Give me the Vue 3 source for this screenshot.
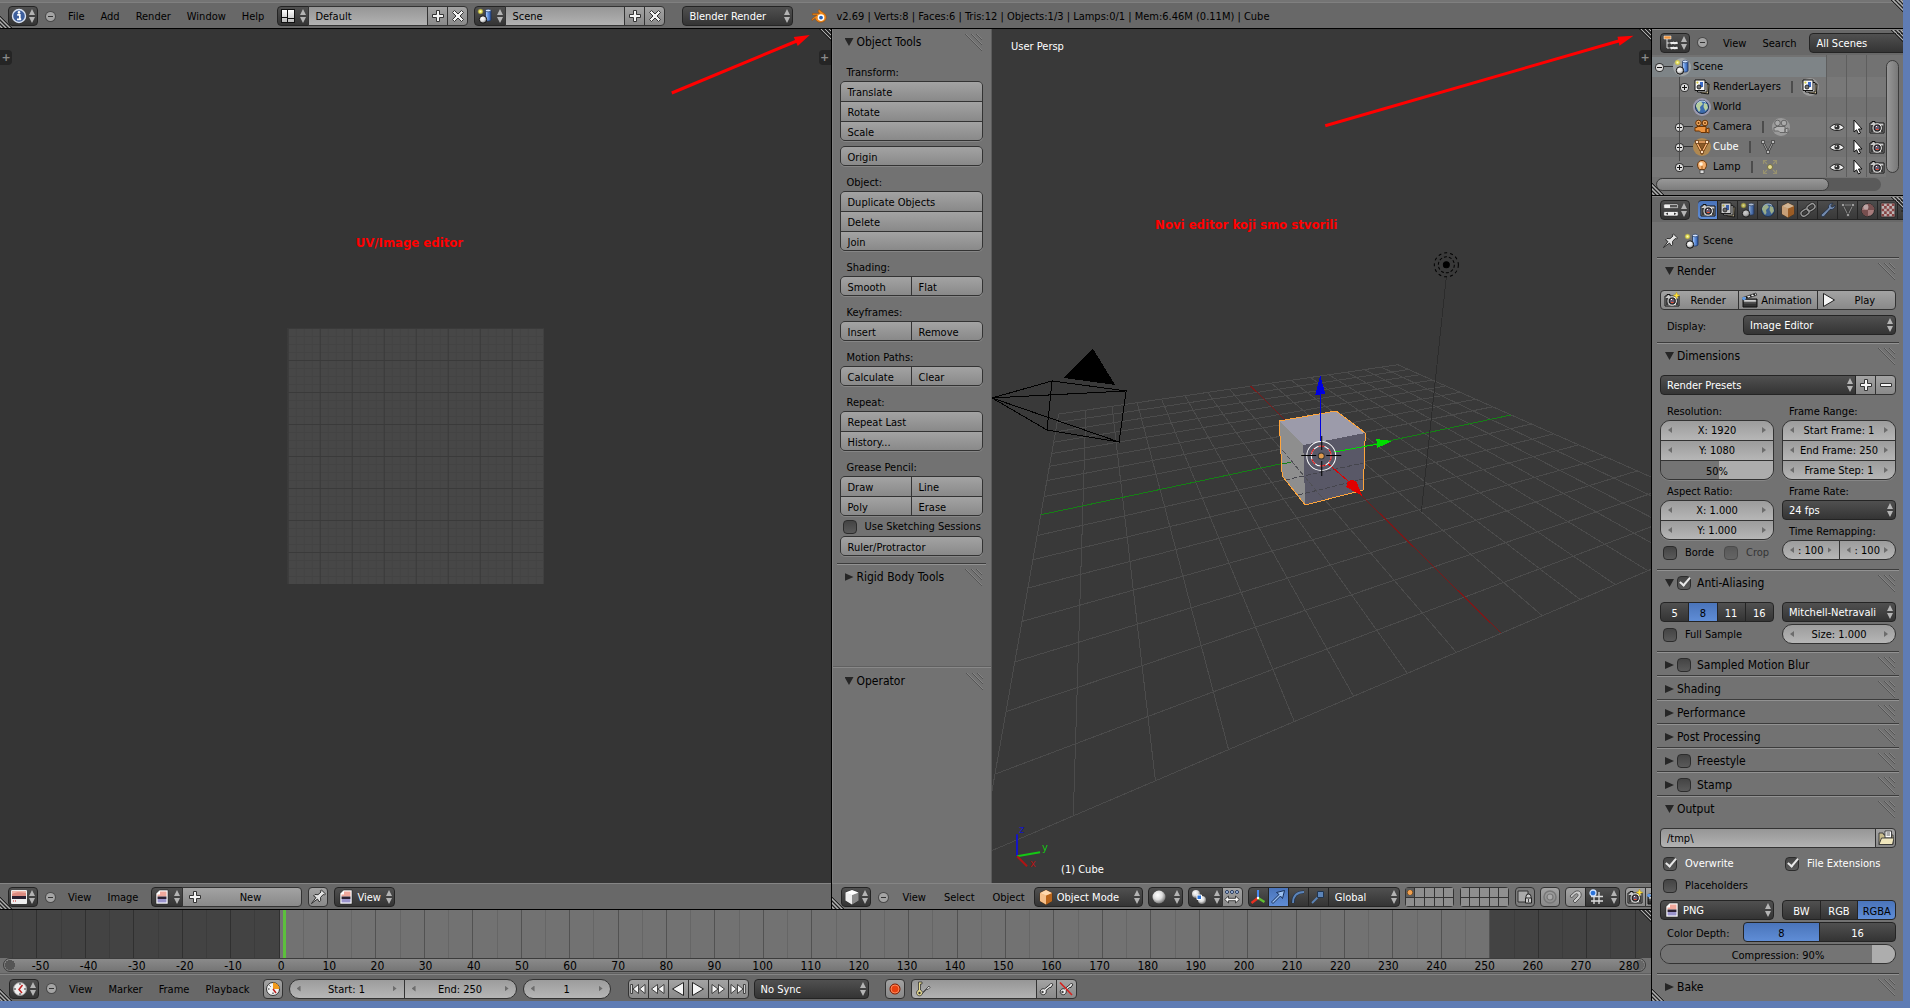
<script setup>
import { h, ref } from 'vue'

const Ic = (p) => h('svg', { class: 'ic', viewBox: '0 0 16 16', 'aria-hidden': 'true' }, [h('use', { href: '#' + p.n })])
Ic.props = ['n']

const Arrows = () => h('svg', { class: 'ud', viewBox: '0 0 6 14', 'aria-hidden': 'true' }, [h('path', { d: 'M3 0L6 6H0zM3 14L6 8H0z', fill: '#b4b4b4' })])
const Hatch = () => h('svg', { class: 'hatch', viewBox: '0 0 17 17', 'aria-hidden': 'true' }, [
  h('path', { d: 'M0 0L17 17M6 0L17 11M11 0L17 6', stroke: '#555' }),
  h('path', { d: 'M1 0L17 16M7 0L17 10M12 0L17 5', stroke: '#999', 'stroke-width': '0.5' })
])
const Corner = (p) => h('svg', { class: ['corner', p.at], viewBox: '0 0 12 12', 'aria-hidden': 'true' }, [
  h('path', { d: 'M0 0L12 12M4 0L12 8M8 0L12 4', stroke: '#222' }),
  h('path', { d: 'M2 0L12 10M6 0L12 6M10 0L12 2', stroke: '#b0b0b0' })
])
Corner.props = ['at']

/* ground-plane perspective: u along X, v along Y, each from -8 to 8 */
const project = (u, v) => {
  const w = 1 - 0.055 * u + 0.02385 * v
  const x = (785.5 - 14.125 * u + 84 * v) / w
  const y = (364 + 16.125 * u - 8.75 * v) / w
  return [980 + x / 2.306, 330 + y / 2.904]
}
const seg = (a, b) => {
  const p = project(...a)
  const q = project(...b)
  return `M${p[0].toFixed(1)} ${p[1].toFixed(1)}L${q[0].toFixed(1)} ${q[1].toFixed(1)}`
}
const steps = Array.from({ length: 17 }, (_, i) => i - 8).filter((i) => i !== 0)
const gridPath = steps.map((i) => seg([i, -8], [i, 8]) + seg([-8, i], [8, i])).join('')
const xAxis = seg([-8, 0], [8, 0])
const yAxis = seg([0, -8], [0, 8])

const framePos = (f) => ((279.6 + 4.843 * f) / 1651) * 100 + '%'
const labelPos = (f) => ((281.2 + 4.814 * f) / 1651) * 100 + '%'
const marks = Array.from({ length: 34 }, (_, i) => i * 10 - 50)
const halfMarks = marks.map((m) => m - 5)

const toolGroups = [
  { label: 'Transform:', rows: [['Translate'], ['Rotate'], ['Scale']] },
  { rows: [['Origin']] },
  { label: 'Object:', rows: [['Duplicate Objects'], ['Delete'], ['Join']] },
  { label: 'Shading:', rows: [['Smooth', 'Flat']] },
  { label: 'Keyframes:', rows: [['Insert', 'Remove']] },
  { label: 'Motion Paths:', rows: [['Calculate', 'Clear']] },
  { label: 'Repeat:', rows: [['Repeat Last'], ['History...']] },
  { label: 'Grease Pencil:', rows: [['Draw', 'Line'], ['Poly', 'Erase']] }
]
const sketching = ref(false)
const tabs = ['camera', 'layers', 'scene', 'world', 'cubeo', 'link', 'wrench', 'mesh', 'material', 'texture', 'particles']
const objects = [
  { name: 'Camera', icon: 'movie', data: 'moviegrey', active: false },
  { name: 'Cube', icon: 'mesho', data: 'mesh', active: true },
  { name: 'Lamp', icon: 'lamp', data: 'lampdata', active: false }
]
const closedPanels = [
  { name: 'Sampled Motion Blur', check: true },
  { name: 'Shading' },
  { name: 'Performance' },
  { name: 'Post Processing' },
  { name: 'Freestyle', check: true },
  { name: 'Stamp', check: true }
]
const transport = [
  ['Jump to start', 'first'], ['Previous keyframe', 'prev'], ['Play reverse', 'playrev'],
  ['Play', 'play'], ['Next keyframe', 'next'], ['Jump to end', 'last']
]
</script>

<template>
  <svg class="defs" aria-hidden="true">
    <defs>
      <radialGradient id="gBall" cx=".4" cy=".35" r=".7"><stop offset="0" stop-color="#fff" /><stop offset=".5" stop-color="#ddd" /><stop offset="1" stop-color="#666" /></radialGradient>
      <linearGradient id="gCyl"><stop offset="0" stop-color="#bcd8ff" /><stop offset=".5" stop-color="#5c8ddb" /><stop offset="1" stop-color="#2c549e" /></linearGradient>
      <radialGradient id="gLamp"><stop offset="0" stop-color="#ffffc0" /><stop offset=".5" stop-color="#e0d84a" /><stop offset="1" stop-color="#b0a83a" stop-opacity="0" /></radialGradient>
      <linearGradient id="gWhite" x2="0" y2="1"><stop offset="0" stop-color="#fff" /><stop offset="1" stop-color="#bbb" /></linearGradient>
    </defs>
    <symbol id="info" viewBox="0 0 16 16"><circle cx="8" cy="8" r="6.5" fill="#3c5e9c" stroke="#d8e2f2" stroke-width="1.4" /><path d="M6.2 6.8h2.6v4.4h1.2M6 11.3h4.2" stroke="#fff" stroke-width="1.7" fill="none" /><circle cx="8" cy="4.4" r="1.3" fill="#fff" /></symbol>
    <symbol id="split" viewBox="0 0 16 16"><path d="M1 1h14v14H1z" fill="#111" /><path d="M2 2h5v7H2zM2 10h5v4H2zM8 2h6v8H8zM8 11h6v3H8z" fill="url(#gWhite)" /></symbol>
    <symbol id="scene" viewBox="0 0 16 16"><path d="M8.5 2.5v9c0 2 5.5 2 5.5 0v-9" fill="url(#gCyl)" stroke="#1c3058" stroke-width=".8" /><ellipse cx="11.2" cy="2.5" rx="2.7" ry="1.3" fill="#d6e6ff" stroke="#1c3058" stroke-width=".6" /><circle cx="6" cy="11.5" r="3.7" fill="url(#gBall)" stroke="#111" /><circle cx="3.5" cy="3.5" r="3.3" fill="url(#gLamp)" /></symbol>
    <symbol id="plus" viewBox="0 0 16 16"><path d="M6.5 2.5h3v4h4v3h-4v4h-3v-4h-4v-3h4z" fill="#f4f4f4" stroke="#333" /></symbol>
    <symbol id="minus" viewBox="0 0 16 16"><path d="M2.5 6.5h11v3h-11z" fill="#f4f4f4" stroke="#333" /></symbol>
    <symbol id="cross" viewBox="0 0 16 16"><path d="M4.5 2.5L8 6l3.5-3.5 2 2L10 8l3.5 3.5-2 2L8 10l-3.5 3.5-2-2L6 8 2.5 4.5z" fill="#f4f4f4" stroke="#333" /></symbol>
    <symbol id="blender" viewBox="0 0 16 16"><path d="M8 1.500l6 4.600c2.600 3 1 8.200-4.400 8.200-3 0-5-1.800-5.400-4L1 12.500 0.800 11 6 7H1.500V5.400h7L6.900 3z" fill="#f08a1c" stroke="#9c4e08" stroke-width=".6" /><circle cx="10" cy="9.6" r="3.3" fill="#fff" /><circle cx="10" cy="9.6" r="1.9" fill="#2862b4" /></symbol>
    <symbol id="outliner" viewBox="0 0 16 16"><path d="M4 4v9h3M4 8h3" fill="none" stroke="#ddd" /><path d="M1 1h7v3H1z" fill="#f0943c" stroke="#fff" stroke-width=".5" /><path d="M7 6.500h8v3H7zM7 11.500h8v3H7z" fill="#eee" stroke="#222" stroke-dasharray="3 .6" stroke-width=".7" /></symbol>
    <symbol id="cubeg" viewBox="0 0 16 16"><path d="M1.500 3.500L8 1l6.500 2.500v8L8 15.500l-6.500-4z" fill="#ccc" stroke="#222" stroke-width=".7" /><path d="M1.500 3.500L8 6v9.500l-6.500-4z" fill="#eee" /><path d="M14.500 3.500L8 6v9.500l6.500-4z" fill="#8a8a8a" /><path d="M1.500 3.500L8 1l6.500 2.500L8 6z" fill="#fff" /></symbol>
    <symbol id="cubeo" viewBox="0 0 16 16"><path d="M2 4L8 1l6 3v8l-6 3.500L2 12z" fill="#e89848" stroke="#5a3008" stroke-width=".7" /><path d="M2 4l6 2.500v9L2 12z" fill="#f6c08a" /><path d="M14 4L8 6.500v9l6-3.500z" fill="#b8651c" /><path d="M2 4l6-3 6 3-6 2.500z" fill="#ffd9ae" /></symbol>
    <symbol id="imged" viewBox="0 0 16 16"><path d="M.5 1.500h15v13H.5z" fill="#222" stroke="#eee" /><path d="M1 2h14v5H1z" fill="#f0b4a8" /><path d="M1 5c4-2 8-2 14-1v3H1z" fill="#dc8a80" /><path d="M1 7h14v3H1z" fill="#2a2030" /><path d="M1 10h14v4H1z" fill="#eee" /><path d="M2 12h3" stroke="#d02020" stroke-dasharray="1 1" /></symbol>
    <symbol id="imgfile" viewBox="0 0 16 16"><path d="M5.500 1H14v14H2V4.500z" fill="#fff" stroke="#222" stroke-width=".6" /><path d="M6 2.500h6.500v5h-9V5.500H6z" fill="#f0a89c" /><path d="M3.500 7.500h9V10h-9z" fill="#2c2234" /><path d="M3.500 10h9v3.500h-9z" fill="#9a94cc" /></symbol>
    <symbol id="clock" viewBox="0 0 16 16"><circle cx="8" cy="8" r="6.5" fill="#eee" stroke="#999" /><path d="M8 2v2M8 12v2M2 8h2M12 8h2" stroke="#333" /><path d="M10.500 4L7 8.500l3 3.500" stroke="#c02020" fill="none" stroke-width="1.5" /></symbol>
    <symbol id="clocko" viewBox="0 0 16 16"><circle cx="8" cy="8" r="6.5" fill="#f4f4f4" stroke="#333" /><path d="M8 8V1.500A6.500 6.500 0 0 1 14.500 8z" fill="#f39a1a" /><path d="M3 8h1.500M8 11.500V13M4.500 4.500l1 1" stroke="#222" /><path d="M8 8l3 4" stroke="#c02020" stroke-width="1.5" /></symbol>
    <symbol id="pin" viewBox="0 0 16 16"><path d="M1.500 14.500L6 8.500 3.500 7 5 5.500l3 .2L11 3l-.6-1.300L11.500 1l4 4-1 1-1.300-.5L10.500 8.500l.2 3-1.500 1.300L7.500 10z" fill="#e4e4e4" stroke="#222" stroke-width=".9" /></symbol>
    <symbol id="first" viewBox="0 0 16 16"><path d="M.7 3.500h1.800v9H.7zM8.500 3.500v9L3 8zM15 3.500v9L9.500 8z" fill="#f4f4f4" stroke="#222" stroke-width=".8" /></symbol>
    <symbol id="last" viewBox="0 0 16 16"><path d="M15.300 3.500h-1.800v9h1.800zM7.500 3.500v9L13 8zM1 3.500v9L6.500 8z" fill="#f4f4f4" stroke="#222" stroke-width=".8" /></symbol>
    <symbol id="prev" viewBox="0 0 16 16"><path d="M7.500 3.500v9L1.500 8zM14 3.500v9L8 8z" fill="#f4f4f4" stroke="#222" stroke-width=".8" /></symbol>
    <symbol id="next" viewBox="0 0 16 16"><path d="M8.500 3.500v9l6-4.500zM2 3.500v9L8 8z" fill="#f4f4f4" stroke="#222" stroke-width=".8" /></symbol>
    <symbol id="playrev" viewBox="0 0 16 16"><path d="M13.500 1.500v13L2.500 8z" fill="#f4f4f4" stroke="#222" /></symbol>
    <symbol id="play" viewBox="0 0 16 16"><path d="M2.500 1.500v13L13.500 8z" fill="#f4f4f4" stroke="#222" /></symbol>
    <symbol id="rec" viewBox="0 0 16 16"><circle cx="8" cy="8" r="5" fill="#e84010" stroke="#7a1a00" /><circle cx="8" cy="8" r="4" fill="none" stroke="#ff9a70" stroke-width=".8" /></symbol>
    <symbol id="keying" viewBox="0 0 16 16"><path d="M4 1h3v2H5.500v6A3 3 0 1 1 3.500 9V1z" fill="#e8dc90" stroke="#333" stroke-width=".8" /><circle cx="4.5" cy="12" r="1.2" fill="#333" /><path d="M7 13l5-5 1 .5 2-2-1-1.500-6 6" fill="#ddd" stroke="#333" stroke-width=".8" /></symbol>
    <symbol id="key" viewBox="0 0 16 16"><path d="M6.500 8L12 3.500l1.500-1.500 1.500 2-1.500 1-.5 1.500-1.500 0L8 9.500A3 3 0 1 1 6.500 8z" fill="#eee" stroke="#222" stroke-width=".9" /><circle cx="4.5" cy="11" r="1.2" fill="#444" /></symbol>
    <symbol id="keydel" viewBox="0 0 16 16"><path d="M6.500 8L12 3.500l1.500-1.500 1.500 2-1.500 1-.5 1.500-1.500 0L8 9.500A3 3 0 1 1 6.500 8z" fill="#eee" stroke="#222" stroke-width=".9" /><circle cx="4.5" cy="11" r="1.2" fill="#444" /><path d="M2 1.500l12 12.500" stroke="#d8201c" stroke-width="1.6" /></symbol>
    <symbol id="ball" viewBox="0 0 16 16"><circle cx="8" cy="8" r="6.5" fill="url(#gBall)" /></symbol>
    <symbol id="pivot" viewBox="0 0 16 16"><circle cx="5" cy="5" r="4" fill="url(#gBall)" /><circle cx="11" cy="11" r="4" fill="url(#gBall)" /><path d="M6 6h4.500v4.500H6z" fill="#2a72d8" stroke="#fff" /></symbol>
    <symbol id="centers" viewBox="0 0 16 16"><circle cx="3" cy="3" r="1.5" fill="#bcd8ff" stroke="#235" /><circle cx="8" cy="3" r="1.5" fill="#bcd8ff" stroke="#235" /><circle cx="13" cy="3" r="1.5" fill="#bcd8ff" stroke="#235" /><path d="M.7 10.500L4.500 7v2.300h7V7l3.800 3.500-3.800 3.500v-2.300h-7V14z" fill="#f4f4f4" stroke="#222" stroke-width=".8" /></symbol>
    <symbol id="axis" viewBox="0 0 16 16"><path d="M8 9V1" stroke="#4a8af0" stroke-width="2" /><path d="M8 9l-6.500 5" stroke="#e83020" stroke-width="2.4" /><path d="M8 9l6.500 4" stroke="#60c030" stroke-width="2.4" /><circle cx="8" cy="9" r="1.2" fill="#fff" /></symbol>
    <symbol id="translate" viewBox="0 0 16 16"><path d="M1.500 13L9 5.500 6.500 3.500 14.500 1.500 12.500 9.500 10.500 7 3 14.500z" fill="#9cc0f0" stroke="#16305c" /></symbol>
    <symbol id="arc" viewBox="0 0 16 16"><path d="M3 14C3 7 7 3 14 3" fill="none" stroke="#1a2c48" stroke-width="3.2" /><path d="M3 14C3 7 7 3 14 3" fill="none" stroke="#5c84b8" stroke-width="1.8" /></symbol>
    <symbol id="scale" viewBox="0 0 16 16"><path d="M2 14l7-7" stroke="#5c84b8" stroke-width="1.8" /><path d="M7.500 2.500h6v6h-6z" fill="#5c84b8" stroke="#20344f" /></symbol>
    <symbol id="lock" viewBox="0 0 16 16"><path d="M1 2h10v11H1z" fill="#aaa" stroke="#333" /><path d="M9 9V7.500a2.500 2.500 0 0 1 5 0V9M8.500 9h6v5h-6z" fill="#ccc" stroke="#222" /><path d="M11 10h1v3h-1z" fill="#444" /></symbol>
    <symbol id="prop" viewBox="0 0 16 16"><circle cx="8" cy="8" r="6" fill="none" stroke="#777" stroke-width="1.5" /><circle cx="8" cy="8" r="3" fill="#aaa" stroke="#777" stroke-width="1.2" /></symbol>
    <symbol id="magnet" viewBox="0 0 16 16"><path d="M3 7l5-4.500c5-2.500 8.500 3 4.500 7L8 14l-2-2 4.500-4.500c1.500-2-.5-3.500-2-2.500L4.500 9z" fill="#ccc" stroke="#555" /></symbol>
    <symbol id="snap" viewBox="0 0 16 16"><path d="M6 5v10M11 3v12M3 7.500h12M3 12h12" stroke="#ddd" stroke-width="1.3" /><circle cx="5" cy="4" r="3" fill="#2a72d8" stroke="#cfe2ff" stroke-width="1.3" /></symbol>
    <symbol id="camera" viewBox="0 0 16 16"><path d="M1 4h2V2.500h3V4h9v10H1z" fill="#c8c8c8" stroke="#111" /><path d="M1.500 6h3v7.500h-3zM12 6.500h2.500v7H12z" fill="#3c3c3c" /><circle cx="8.2" cy="9" r="4.2" fill="#222" stroke="#f4f4f4" /><circle cx="8.2" cy="9" r="2.4" fill="#6a5a70" /><path d="M7 10.500l2.500 0" stroke="#f05030" /><path d="M7 8l1-1" stroke="#fff" /></symbol>
    <symbol id="camnew" viewBox="0 0 16 16"><use href="#camera" /><path d="M12.500 0l1 2.500 2.500 1-2.500 1-1 2.500-1-2.500-2.500-1 2.500-1z" fill="#ffe23c" stroke="#a88a10" stroke-width=".4" /></symbol>
    <symbol id="clap" viewBox="0 0 16 16"><path d="M1 7h14v8H1z" fill="#333" stroke="#111" /><path d="M1 5.500L14 1l.8 2.200L1.500 7.500z" fill="#f4f4f4" stroke="#111" stroke-width=".7" /><path d="M4 4.600l1.500 1.500M8 3.200l1.500 1.500M11.500 2l1.500 1.500" stroke="#111" stroke-width="1.5" /><path d="M2 8h12v1.800H2zM2 11h12" fill="#e8e8e8" stroke="#888" stroke-width=".5" /><circle cx="2" cy="6.5" r="1.8" fill="#5c9ae8" /></symbol>
    <symbol id="eye" viewBox="0 0 16 16"><path d="M1 8.500C4 4 12 4 15 8.500 12 12.500 4 12.500 1 8.500z" fill="#eee" stroke="#222" /><circle cx="8" cy="8" r="2.6" fill="#333" /><circle cx="7.3" cy="7.3" r=".8" fill="#fff" /></symbol>
    <symbol id="cursor" viewBox="0 0 16 16"><path d="M5 1l8 9H9.500l2 4-2 1-2-4.200L5 13z" fill="#fff" stroke="#111" /></symbol>
    <symbol id="layers" viewBox="0 0 16 16"><path d="M5 5h10l-.5 10L7 14z" fill="#c8b890" stroke="#111" /><path d="M3.500 3.500H13V13H3.500z" fill="#eee" stroke="#111" /><path d="M1 1h10v10.500H1z" fill="#f8f8f8" stroke="#111" /><path d="M6 3h3v5H6z" fill="#3a6ac8" /><circle cx="5" cy="8" r="2" fill="#777" stroke="#111" stroke-width=".8" /><circle cx="3.4" cy="3.6" r="1.1" fill="#d8cc40" /></symbol>
    <symbol id="world" viewBox="0 0 16 16"><circle cx="8" cy="8" r="6.5" fill="#3c6cae" stroke="#1c3050" /><path d="M3 4l4-1.500L9 5 6 8l.5 3L5 13 3 9.500 1.800 7zM10 4l3 1 1 4-2.500 3L9.500 8z" fill="#b8d0a0" /><path d="M3.500 4C6 1.500 10 1.500 12 3.500" stroke="#d8ecff" fill="none" /></symbol>
    <symbol id="movie" viewBox="0 0 16 16"><circle cx="4.5" cy="4" r="2.8" fill="#f0a860" stroke="#6a3404" /><circle cx="11" cy="4" r="2.8" fill="#f0a860" stroke="#6a3404" /><path d="M3 7.500h9v6H7L5.500 12H1V8.500h2zM12 10l3-1v5l-3-1z" fill="#ec9440" stroke="#6a3404" /><circle cx="4.5" cy="4" r=".9" fill="#6a3404" /><circle cx="11" cy="4" r=".9" fill="#6a3404" /></symbol>
    <symbol id="moviegrey" viewBox="0 0 16 16"><circle cx="4.5" cy="4" r="2.8" fill="#aaa" stroke="#666" /><circle cx="11" cy="4" r="2.8" fill="#aaa" stroke="#666" /><path d="M3 7.500h9v6H7L5.500 12H1V8.500h2zM12 10l3-1v5l-3-1z" fill="#b4b4b4" stroke="#666" /></symbol>
    <symbol id="mesh" viewBox="0 0 16 16"><path d="M3 3h10L8 13z" fill="none" stroke="#333" stroke-width="2.2" /><path d="M3 3h10L8 13z" fill="none" stroke="#aaa" /><path d="M1.500 1.500h3v3h-3zM11.500 1.500h3v3h-3zM6.500 11.500h3v3h-3z" fill="#bbb" stroke="#333" stroke-width=".7" /></symbol>
    <symbol id="mesho" viewBox="0 0 16 16"><path d="M2.500 3h11L8 13.500z" fill="#8a5a28" stroke="#5a2c04" stroke-width="2.6" /><path d="M2.500 3h11L8 13.500z" fill="none" stroke="#ffb878" stroke-width="1.4" /><path d="M1.500 1.500h3v3h-3zM11.500 1.500h3v3h-3zM6.500 11.500h3v3h-3z" fill="#ffe0c0" stroke="#5a2c04" stroke-width=".7" /></symbol>
    <symbol id="lamp" viewBox="0 0 16 16"><path d="M5.500 10.500C2 7 3.500 1.500 8 1.500S14 7 10.500 10.500z" fill="#f4b070" stroke="#6a3404" /><path d="M6 11h4v3.500H6z" fill="#ddd" stroke="#444" stroke-width=".8" /><circle cx="7" cy="5" r="1.8" fill="#fff2dc" /><path d="M8 7v3.500" stroke="#a45a14" /></symbol>
    <symbol id="lampdata" viewBox="0 0 16 16"><circle cx="8" cy="8" r="2.5" fill="#e4dc90" stroke="#777040" /><path d="M1.500 5V1.500H5M11 1.500h3.500V5M14.500 11v3.500H11M5 14.500H1.500V11M2 2l3 3M14 2l-3 3M2 14l3-3M14 14l-3-3" fill="none" stroke="#989270" stroke-width="1.1" /></symbol>
    <symbol id="link" viewBox="0 0 16 16"><rect x="6.5" y="2.5" width="8.5" height="5.5" rx="2.7" transform="rotate(-35 11 5)" fill="none" stroke="#222" stroke-width="3" /><rect x="1" y="8" width="8.5" height="5.5" rx="2.7" transform="rotate(-35 5 11)" fill="none" stroke="#222" stroke-width="3" /><rect x="6.5" y="2.5" width="8.5" height="5.5" rx="2.7" transform="rotate(-35 11 5)" fill="none" stroke="#b8b8b8" stroke-width="1.4" /><rect x="1" y="8" width="8.5" height="5.5" rx="2.7" transform="rotate(-35 5 11)" fill="none" stroke="#b8b8b8" stroke-width="1.4" /></symbol>
    <symbol id="wrench" viewBox="0 0 16 16"><path d="M1.500 12.500l7-6.500C8 3 10 1 13 1.300L11 3.500l.3 1.300 1.500.2L15 3c.4 3-2 5-5 4.500L4 14.500c-1.500 1-3.500-.8-2.500-2z" fill="#84a4d4" stroke="#1c2c48" stroke-width=".9" /></symbol>
    <symbol id="material" viewBox="0 0 16 16"><circle cx="8" cy="8" r="6.5" fill="#c89090" stroke="#222" /><path d="M8 8V1.500A6.500 6.500 0 0 1 14.500 8zM8 8v6.500A6.500 6.500 0 0 1 1.500 8z" fill="#8a5454" /><circle cx="6" cy="5" r="2.5" fill="#f0dcdc" opacity=".7" /></symbol>
    <symbol id="texture" viewBox="0 0 16 16"><path d="M1 1h14v14H1z" fill="#e8dada" stroke="#222" /><path d="M1.500 1.500h2.600v2.600H1.500zM6.700 1.500h2.600v2.600H6.700zM11.900 1.500h2.600v2.600h-2.600zM4.100 4.100h2.600v2.600H4.100zM9.300 4.100h2.600v2.600H9.300zM1.500 6.700h2.600v2.600H1.500zM6.700 6.700h2.600v2.600H6.700zM11.900 6.700h2.600v2.600h-2.600zM4.100 9.300h2.600v2.600H4.100zM9.300 9.300h2.600v2.600H9.300zM1.500 11.900h2.600v2.600H1.500zM6.700 11.900h2.600v2.600H6.700zM11.900 11.900h2.600v2.600h-2.600z" fill="#a04444" /></symbol>
    <symbol id="particles" viewBox="0 0 16 16"><path d="M1 9l6-2 2-5 2 5 5 2-5 2-2 4-2-4z" fill="#c8a838" stroke="#222" /></symbol>
    <symbol id="props" viewBox="0 0 16 16"><rect x=".7" y="2" width="14.500" height="4.500" rx="1.2" fill="#eee" stroke="#222" stroke-width=".6" /><rect x="7" y="3" width="7.200" height="2.500" fill="#555" /><rect x=".7" y="9.500" width="14.500" height="4.500" rx="1.2" fill="#eee" stroke="#222" stroke-width=".6" /><path d="M5 10.500v2.500l-2.500-1.200zM11 10.500v2.500l2.500-1.200z" fill="#333" /></symbol>
    <symbol id="folder" viewBox="0 0 16 16"><path d="M1 3h4l1 2h9v9.500H1z" fill="#c8bc8c" stroke="#333" stroke-width=".9" /><path d="M7 1h6.500v7H7z" fill="#fff" stroke="#333" stroke-width=".9" /><path d="M8.500 3h3.500M8.500 5h3.500" stroke="#555" /><path d="M1 14.500L3.500 8H16l-1.500 6.500z" fill="#efe6bc" stroke="#333" stroke-width=".9" /></symbol>
  </svg>

  <div class="app">
    <header class="bar top">
      <button class="menu-btn ed" aria-label="Editor type: Info"><Ic n="info" /><Arrows /></button>
      <button class="collapse" aria-label="Collapse menus"></button>
      <nav class="menus"><button>File</button><button>Add</button><button>Render</button><button>Window</button><button>Help</button></nav>
      <div class="join">
        <button class="menu-btn wide" aria-label="Browse screens"><Ic n="split" /><Arrows /></button>
        <input class="field name" value="Default" aria-label="Screen name">
        <button class="lite sq" aria-label="Add screen"><Ic n="plus" /></button>
        <button class="lite sq" aria-label="Delete screen"><Ic n="cross" /></button>
      </div>
      <div class="join">
        <button class="menu-btn wide" aria-label="Browse scenes"><Ic n="scene" /><Arrows /></button>
        <input class="field name" value="Scene" aria-label="Scene name">
        <button class="lite sq" aria-label="Add scene"><Ic n="plus" /></button>
        <button class="lite sq" aria-label="Delete scene"><Ic n="cross" /></button>
      </div>
      <div class="sel engine"><select aria-label="Render engine"><option>Blender Render</option></select><Arrows /></div>
      <Ic n="blender" class="logo" />
      <p class="stats">v2.69 | Verts:8 | Faces:6 | Tris:12 | Objects:1/3 | Lamps:0/1 | Mem:6.46M (0.11M) | Cube</p>
      <Corner at="bl" /><Corner at="tr" />
    </header>

    <div class="main">
      <div class="work">
        <div class="views">
          <section class="area uv">
            <div class="canvas">
              <svg viewBox="0 29 831 854" preserveAspectRatio="xMidYMid slice">
                <defs>
                  <pattern id="fine" x="288" y="328" width="8" height="8" patternUnits="userSpaceOnUse"><path d="M0 .5H8M.5 0V8" stroke="#434343" /></pattern>
                  <pattern id="coarse" x="288" y="328" width="32" height="32" patternUnits="userSpaceOnUse"><path d="M0 .5H32M.5 0V32" stroke="#3a3a3a" /></pattern>
                </defs>
                <rect x="288" y="328" width="256" height="256" fill="#474747" />
                <rect x="288" y="328" width="256" height="256" fill="url(#fine)" />
                <rect x="288" y="328" width="256" height="256" fill="url(#coarse)" />
                <path d="M672 93L797 41" stroke="#f00" stroke-width="3" />
                <path d="M810 35L794 37L798 46z" fill="#f00" />
                <text class="note" x="356" y="247">UV/Image editor</text>
              </svg>
              <button class="tab left" aria-label="Show tools">+</button>
              <button class="tab right" aria-label="Show properties">+</button>
              <Corner at="tr" />
            </div>
            <footer class="bar">
              <button class="menu-btn ed" aria-label="Editor type: UV/Image"><Ic n="imged" /><Arrows /></button>
              <button class="collapse" aria-label="Collapse menus"></button>
              <nav class="menus"><button>View</button><button>Image</button></nav>
              <div class="join">
                <button class="menu-btn wide" aria-label="Browse images"><Ic n="imgfile" /><Arrows /></button>
                <button class="lite new"><Ic n="plus" /><span>New</span></button>
              </div>
              <button class="lite sq solo" aria-label="Pin image"><Ic n="pin" /></button>
              <div class="sel icon uvmode"><Ic n="imgfile" /><select aria-label="Image mode"><option>View</option></select><Arrows /></div>
              <Corner at="bl" />
            </footer>
          </section>

          <section class="area v3d">
            <div class="body">
              <aside class="tools">
                <section class="panel first">
                  <h2><button class="open">Object Tools</button><Hatch /></h2>
                  <div class="pbody">
                    <div v-for="(g, i) in toolGroups" :key="i" class="tgroup">
                      <p v-if="g.label" class="lbl">{{ g.label }}</p>
                      <div class="stack">
                        <div v-for="(r, j) in g.rows" :key="j" class="srow"><button v-for="b in r" :key="b" class="tool">{{ b }}</button></div>
                      </div>
                    </div>
                    <label class="check"><input v-model="sketching" type="checkbox">Use Sketching Sessions</label>
                    <div class="stack"><div class="srow"><button class="tool">Ruler/Protractor</button></div></div>
                  </div>
                </section>
                <section class="panel"><h2><button>Rigid Body Tools</button><Hatch /></h2></section>
                <section class="operator"><h2><button class="open">Operator</button><Hatch /></h2></section>
              </aside>
              <div class="canvas">
                <svg viewBox="992 29 659 854" preserveAspectRatio="xMidYMid slice">
                  <g class="crisp">
                    <path :d="gridPath" stroke="#4b4b4b" fill="none" />
                    <path :d="xAxis" stroke="#7c1818" />
                    <path :d="yAxis" stroke="#168016" />
                    <path d="M1446 277L1421 512" stroke="#2c2c2c" />
                    <path d="M1279 421L1303 445L1305 505L1282 476z" fill="#8e8e8e" />
                    <path d="M1279 421L1336 411L1365 433L1303 445z" fill="#9c9baa" />
                    <path d="M1303 445L1365 433L1363 490L1305 505z" fill="#595867" />
                    <path d="M1282 464L1291 462" stroke="#168016" />
                    <path d="M1285 480L1363 463M1298 495L1363 479" stroke="#45454d" stroke-dasharray="5 2" fill="none" />
                    <path d="M1282 450L1324 500" stroke="#505055" stroke-dasharray="5 2" />
                    <path d="M1279 421L1336 411L1365 433L1363 490L1305 505L1282 476z" fill="none" stroke="#ffa53c" />
                    <path d="M992 398L1052 381L1126 391L1119 442L1047 430zM1052 381L1047 430M992 398L1126 391M992 398L1119 442" fill="none" stroke="#000" />
                    <path d="M1093 349L1064 378L1115 385z" fill="#000" />
                    <path d="M1320 442V394" stroke="#0000e0" /><path d="M1320 375L1325 394L1315 395z" fill="#0000e0" />
                    <path d="M1334 452L1378 444" stroke="#00dc00" /><path d="M1392 441L1376 439L1377 448z" fill="#00dc00" />
                    <path d="M1327 463L1349 482" stroke="#e00000" /><path d="M1362 496L1346 487L1347 482L1351 480L1356 481z" fill="#e00000" />
                  </g>
                  <g fill="none" stroke="#000">
                    <circle cx="1446" cy="265" r="12" stroke-dasharray="3 3" /><circle cx="1446" cy="265" r="8" stroke-dasharray="3 2" />
                    <circle cx="1446" cy="265" r="3" fill="#000" />
                  </g>
                  <circle cx="1321" cy="456" r="10" fill="none" stroke="#fff" /><circle cx="1321" cy="456" r="10" fill="none" stroke="#e00000" stroke-dasharray="6 5" />
                  <circle cx="1321" cy="456" r="14.500" fill="none" stroke="#fff" />
                  <path d="M1301 455.500H1316M1326 455.500H1341M1321.500 436V450M1321.500 461V476" stroke="#000" />
                  <circle cx="1321" cy="456" r="3" fill="#e09a4c" stroke="#333" />
                  <path d="M1017 834V856" stroke="#1414c8" stroke-width="2" /><path d="M1017 856L1040 852" stroke="#14c814" stroke-width="2" /><path d="M1017 856L1027 866" stroke="#b01414" stroke-width="2" />
                  <text x="1019" y="833" fill="#1414c8">z</text><text x="1042" y="851" fill="#14c814">y</text><text x="1030" y="867" fill="#b01414">x</text>
                  <text x="1011" y="50" fill="#fff">User Persp</text>
                  <text x="1061" y="873" fill="#fff">(1) Cube</text>
                  <path d="M1325 126L1619 41" stroke="#f00" stroke-width="3" />
                  <path d="M1633 36L1617 37L1619 46z" fill="#f00" />
                  <text class="note" x="1155" y="229">Novi editor koji smo stvorili</text>
                </svg>
                <button class="tab right" aria-label="Show properties">+</button>
                <Corner at="tr" />
              </div>
            </div>
            <footer class="bar">
              <button class="menu-btn ed" aria-label="Editor type: 3D View"><Ic n="cubeg" /><Arrows /></button>
              <button class="collapse" aria-label="Collapse menus"></button>
              <nav class="menus"><button>View</button><button>Select</button><button>Object</button></nav>
              <div class="sel icon omode"><Ic n="cubeo" /><select aria-label="Mode"><option>Object Mode</option></select><Arrows /></div>
              <button class="menu-btn shade" aria-label="Viewport shading"><Ic n="ball" /><Arrows /></button>
              <div class="join">
                <button class="menu-btn shade" aria-label="Pivot point"><Ic n="pivot" /><Arrows /></button>
                <button class="lite sq" aria-label="Manipulate center points"><Ic n="centers" /></button>
              </div>
              <div class="join">
                <button class="dark sq" aria-label="Manipulator"><Ic n="axis" /></button>
                <button class="dark sq on" aria-label="Translate"><Ic n="translate" /></button>
                <button class="dark sq" aria-label="Rotate"><Ic n="arc" /></button>
                <button class="dark sq" aria-label="Scale"><Ic n="scale" /></button>
                <div class="sel orient"><select aria-label="Orientation"><option>Global</option></select><Arrows /></div>
              </div>
              <div v-for="g in 2" :key="g" class="lay"><button v-for="n in 10" :key="n" :aria-label="'Layer ' + ((g - 1) * 10 + n)" :class="{ used: g === 1 && n === 1 }"></button></div>
              <button class="lite sq solo dim" aria-label="Lock to scene"><Ic n="lock" /></button>
              <button class="lite sq solo" aria-label="Proportional editing"><Ic n="prop" /></button>
              <div class="join">
                <button class="lite sq" aria-label="Snap"><Ic n="magnet" /></button>
                <button class="menu-btn shade" aria-label="Snap element"><Ic n="snap" /><Arrows /></button>
              </div>
              <div class="join"><button class="lite sq" aria-label="Render image"><Ic n="camnew" /></button><button class="lite sq" aria-label="Render animation"><Ic n="clap" /></button></div>
              <Corner at="bl" />
            </footer>
          </section>
        </div>

        <section class="timeline">
          <div class="track">
            <div class="range" :style="{ left: framePos(0), right: 'calc(100% - ' + framePos(250) + ')' }"></div>
            <i v-for="m in halfMarks" :key="'h' + m" class="mid" :style="{ left: framePos(m) }"></i>
            <i v-for="m in marks" :key="m" :style="{ left: framePos(m) }"></i>
            <b :style="{ left: framePos(1) }"></b>
            <Corner at="tr" />
          </div>
          <div class="ruler"><div class="rail"></div><span v-for="m in marks" :key="m" :style="{ left: labelPos(m) }">{{ m }}</span></div>
          <footer class="bar">
            <button class="menu-btn ed" aria-label="Editor type: Timeline"><Ic n="clock" /><Arrows /></button>
            <button class="collapse" aria-label="Collapse menus"></button>
            <nav class="menus"><button>View</button><button>Marker</button><button>Frame</button><button>Playback</button></nav>
            <button class="lite sq solo" aria-label="Use preview range"><Ic n="clocko" /></button>
            <div class="join pill">
              <label class="num w115"><input value="Start: 1" aria-label="Start frame"></label>
              <label class="num w112"><input value="End: 250" aria-label="End frame"></label>
            </div>
            <div class="join pill"><label class="num w88"><input value="1" aria-label="Current frame"></label></div>
            <div class="join transport"><button v-for="t in transport" :key="t[0]" class="lite sq" :aria-label="t[0]"><Ic :n="t[1]" /></button></div>
            <div class="sel sync"><select aria-label="Sync mode"><option>No Sync</option></select><Arrows /></div>
            <button class="lite sq solo rec" aria-label="Auto keyframe"><Ic n="rec" /></button>
            <div class="join">
              <div class="keyset"><Ic n="keying" /><input class="field" value="" aria-label="Keying set"></div>
              <button class="lite sq" aria-label="Insert keyframes"><Ic n="key" /></button>
              <button class="lite sq" aria-label="Delete keyframes"><Ic n="keydel" /></button>
            </div>
            <Corner at="bl" />
          </footer>
        </section>
      </div>

      <div class="side">
        <section class="outliner">
          <header class="bar">
            <button class="menu-btn ed" aria-label="Editor type: Outliner"><Ic n="outliner" /><Arrows /></button>
            <button class="collapse" aria-label="Collapse menus"></button>
            <nav class="menus"><button>View</button><button>Search</button></nav>
            <div class="sel scenes"><select aria-label="Display mode"><option>All Scenes</option></select></div>
            <Corner at="tr" />
          </header>
          <div class="tree">
            <ul>
              <li class="root"><button class="tg open" aria-label="Collapse Scene"></button><i class="wire"></i><span class="halo"><Ic n="scene" /></span><span>Scene</span></li>
              <li class="l1"><button class="tg" aria-label="Expand RenderLayers"></button><Ic n="layers" class="oi" /><span>RenderLayers</span><i class="vb"></i><span class="halo"><Ic n="layers" /></span></li>
              <li class="l2"><span class="halo blue"><Ic n="world" /></span><span>World</span></li>
              <li v-for="o in objects" :key="o.name" class="l0" :class="{ act: o.active }">
                <button class="tg" :aria-label="'Expand ' + o.name"></button><i class="wire"></i>
                <span class="halo" :class="o.active ? 'gold' : 'none'"><Ic :n="o.icon" /></span><span>{{ o.name }}</span><i class="vb"></i>
                <span class="halo" :class="{ none: o.name !== 'Camera' }"><Ic :n="o.data" /></span>
                <span class="flags"><button aria-label="Visible"><Ic n="eye" /></button><button aria-label="Selectable"><Ic n="cursor" /></button><button aria-label="Renderable"><Ic n="camera" /></button></span>
              </li>
            </ul>
            <div class="cols"><i></i><i></i><i></i></div>
            <div class="stem"></div>
            <div class="vscroll"></div>
          </div>
          <div class="hscroll"><div></div></div>
          <Corner at="bl" />
        </section>

        <section class="properties">
          <header class="bar">
            <button class="menu-btn ed" aria-label="Editor type: Properties"><Ic n="props" /><Arrows /></button>
            <nav class="ptabs"><button v-for="(t, i) in tabs" :key="t" :class="{ on: i === 0 }" :aria-label="t"><Ic :n="t" /></button></nav>
            <Corner at="tr" />
          </header>
          <div class="context"><Ic n="pin" /><Ic n="scene" /><span>Scene</span></div>

          <section class="panel">
            <h2><button class="open">Render</button><Hatch /></h2>
            <div class="pbody">
              <div class="join full r3"><button class="lite"><Ic n="camnew" /><span>Render</span></button><button class="lite"><Ic n="clap" /><span>Animation</span></button><button class="lite"><Ic n="play" /><span>Play</span></button></div>
              <div class="line"><label class="lbl" for="disp">Display:</label><div class="sel disp"><select id="disp"><option>Image Editor</option></select><Arrows /></div></div>
            </div>
          </section>

          <section class="panel">
            <h2><button class="open">Dimensions</button><Hatch /></h2>
            <div class="pbody">
              <div class="join full"><div class="sel grow"><select aria-label="Render presets"><option>Render Presets</option></select><Arrows /></div><button class="lite sq" aria-label="Add preset"><Ic n="plus" /></button><button class="lite sq" aria-label="Remove preset"><Ic n="minus" /></button></div>
              <div class="two">
                <div>
                  <p class="lbl">Resolution:</p>
                  <div class="nstack">
                    <label class="num"><input value="X: 1920" aria-label="Resolution X"></label>
                    <label class="num"><input value="Y: 1080" aria-label="Resolution Y"></label>
                    <label class="slide"><input type="range" value="50" aria-label="Resolution percentage" :style="{ '--p': '52%' }"><span>50%</span></label>
                  </div>
                  <p class="lbl">Aspect Ratio:</p>
                  <div class="nstack"><label class="num"><input value="X: 1.000" aria-label="Aspect X"></label><label class="num"><input value="Y: 1.000" aria-label="Aspect Y"></label></div>
                  <div class="line gap2"><label class="check border"><input type="checkbox">Borde</label><label class="check off"><input type="checkbox" disabled>Crop</label></div>
                </div>
                <div>
                  <p class="lbl">Frame Range:</p>
                  <div class="nstack">
                    <label class="num"><input value="Start Frame: 1" aria-label="Start frame"></label>
                    <label class="num"><input value="End Frame: 250" aria-label="End frame"></label>
                    <label class="num"><input value="Frame Step: 1" aria-label="Frame step"></label>
                  </div>
                  <p class="lbl">Frame Rate:</p>
                  <div class="sel"><select aria-label="Frame rate"><option>24 fps</option></select><Arrows /></div>
                  <p class="lbl">Time Remapping:</p>
                  <div class="join pill full"><label class="num grow"><input value=": 100" aria-label="Remap old"></label><label class="num grow"><input value=": 100" aria-label="Remap new"></label></div>
                </div>
              </div>
            </div>
          </section>

          <section class="panel">
            <h2><button class="open" aria-label="Anti-Aliasing panel"></button><label class="check"><input type="checkbox" checked>Anti-Aliasing</label><Hatch /></h2>
            <div class="pbody">
              <div class="two rows">
                <div>
                  <div class="join full seg"><button class="dark">5</button><button class="dark on">8</button><button class="dark">11</button><button class="dark">16</button></div>
                  <label class="check"><input type="checkbox">Full Sample</label>
                </div>
                <div>
                  <div class="sel"><select aria-label="Filter"><option>Mitchell-Netravali</option></select><Arrows /></div>
                  <div class="join pill full"><label class="num grow"><input value="Size: 1.000" aria-label="Filter size"></label></div>
                </div>
              </div>
            </div>
          </section>

          <section v-for="p in closedPanels" :key="p.name" class="panel">
            <h2 v-if="p.check"><button :aria-label="p.name + ' panel'"></button><label class="check"><input type="checkbox">{{ p.name }}</label><Hatch /></h2>
            <h2 v-else><button>{{ p.name }}</button><Hatch /></h2>
          </section>

          <section class="panel">
            <h2><button class="open">Output</button><Hatch /></h2>
            <div class="pbody out">
              <div class="join full"><input class="field grow" value="/tmp\" aria-label="Output path"><button class="lite sq" aria-label="Browse"><Ic n="folder" /></button></div>
              <div class="two rows">
                <div><label class="check lit"><input type="checkbox" checked>Overwrite</label><label class="check"><input type="checkbox">Placeholders</label></div>
                <div><label class="check lit"><input type="checkbox" checked>File Extensions</label></div>
              </div>
              <div class="fmt">
                <div class="two">
                  <div><div class="sel icon"><Ic n="imgfile" /><select aria-label="File format"><option>PNG</option></select><Arrows /></div></div>
                  <div><div class="join full seg"><button class="dark">BW</button><button class="dark">RGB</button><button class="dark on">RGBA</button></div></div>
                </div>
                <div class="line"><span class="lbl">Color Depth:</span><div class="join seg depth"><button class="dark on">8</button><button class="dark">16</button></div></div>
                <label class="slide round"><input type="range" value="90" aria-label="Compression" :style="{ '--p': '90%' }"><span>Compression: 90%</span></label>
              </div>
            </div>
          </section>
          <section class="panel"><h2><button>Bake</button><Hatch /></h2></section>
          <Corner at="bl" />
        </section>
      </div>
    </div>
  </div>
</template>

<style>
body { margin: 0; background: #5f7cb4; }
</style>

<style scoped>
.defs { position: absolute; width: 0; height: 0; }
.app, .app * { box-sizing: border-box; }
.app {
  min-height: 100vh; display: flex; flex-direction: column; padding: 0 7px 7px 0; overflow: hidden;
  background: #5f7cb4; color: #000; font: 11px/20px "DejaVu Sans Condensed", "DejaVu Sans", sans-serif;
}
.app p, .app h2, .app ul { margin: 0; padding: 0; list-style: none; font-weight: normal; }
.app button, .app input, .app select { font: inherit; color: inherit; margin: 0; padding: 0; border: 0; background: none; border-radius: 0; outline: 0; }
.ic { width: 16px; height: 16px; flex: none; display: block; }
.ud { width: 6px; height: 14px; flex: none; display: block; }

/* header bars */
.bar { position: relative; flex: none; display: flex; align-items: center; height: 26px; padding: 1px 0 0 8px; background: #686868; border-top: 1px solid #858585; overflow: hidden; white-space: nowrap; }
.bar > * { flex: none; }
.top { height: 29px; padding-top: 4px; border-bottom: 1px solid #000; background: #686868 linear-gradient(#747474 2px, #808080 2px, #808080 3px, transparent 3px); border-top: 0; }
.side .bar { padding-top: 0; }
.menu-btn, .dark, .sel select { height: 20px; border: 1px solid #242424 !important; background: linear-gradient(#505050, #343434) !important; color: #fff !important; }
.menu-btn { display: flex; align-items: center; justify-content: center; gap: 4px; border-radius: 4px !important; flex: none; }
.ed { width: 30px; gap: 2px; }
.wide { width: 32px; }
.shade { width: 35px; gap: 7px; }
.collapse { position: relative; width: 9px; height: 9px; margin: 0 5px 0 8px !important; border-radius: 50% !important; background: linear-gradient(#333, #333) center / 5px 1px no-repeat #a4a4a4 !important; box-shadow: 0 0 0 1px #4a4a4a; flex: none; }
.menus { display: flex; margin-right: 5px; }
.app .menus button { padding: 1px 8px 0; height: 20px; }
.v3d .menus { margin: 0 0 0 1px; }
.app .v3d .menus button { padding: 1px 9px 0; }
.outliner .menus { margin: 0 5px 0 3px; }
.timeline .bar, .v3d .bar { padding-left: 9px; }
.join { display: flex; flex: none; }
.bar > .join, .bar > .sel, .bar > .solo, .bar > .shade, .bar > .lay { margin-right: 6px !important; }
.v3d .bar > .join, .v3d .bar > .sel, .v3d .bar > .solo, .v3d .bar > .shade { margin-right: 5px !important; }
.join > * + * { margin-left: -1px !important; }
.join > *, .join > .sel > select { border-radius: 0 !important; }
.join > :first-child { border-radius: 4px 0 0 4px !important; }
.join > :last-child, .join > .sel:last-child > select { border-radius: 0 4px 4px 0 !important; }
.join > .sel:first-child > select { border-radius: 4px 0 0 4px !important; }
.lite, .tool { height: 20px; border: 1px solid #333 !important; background: linear-gradient(#a3a3a3, #898989) !important; display: flex; align-items: center; justify-content: center; flex: none; }
.sq { width: 21px; display: flex; align-items: center; justify-content: center; }
.solo { width: 20px; border-radius: 4px !important; }
.dim { background: #7c7c7c !important; }
.field { height: 20px; border: 1px solid #333 !important; background: linear-gradient(#969696, #b2b2b2) !important; padding: 2px 6px 0 !important; min-width: 0; }
.name { width: 120px; }
.on { background: linear-gradient(#4a74ba, #5f8dd6) !important; color: #000 !important; }
.sel { position: relative; height: 20px; }
.sel select { appearance: none; width: 100%; border-radius: 4px !important; padding: 2px 10px 0 6px !important; line-height: 16px !important; display: block; }
.sel .ud { position: absolute; right: 3px; top: 3px; pointer-events: none; }
.sel.icon .ic { position: absolute; left: 4px; top: 2px; pointer-events: none; }
.sel.icon select { padding-left: 22px !important; }
.engine { width: 111px; margin-left: 11px; }
.logo { margin: 0 9px 0 12px; }
.stats { height: 20px; line-height: 22px; }
.new { width: 120px; padding: 0 4px !important; }
.new span { flex: 1; padding-top: 2px; }
.uvmode { width: 61px; }
.omode { width: 109px; }
.orient { width: 72px; }
.lay { display: grid; grid-template-columns: repeat(5, 1fr); gap: 1px; width: 49px; height: 20px; padding: 1px; background: #333; border-radius: 4px; overflow: hidden; }
.app .lay button { background: #8f8f8f; }
.app .lay .used { background: radial-gradient(circle, #f0a050 2px, #4a2c08 3px, #5c5c5c 3px); }
.rec { margin-left: 10px !important; }
.timeline .bar > .join.transport { margin: 0 5px 0 11px !important; }
.sync { width: 115px; }
.keyset { position: relative; width: 126px; border-radius: 4px 0 0 4px; }
.keyset .field { width: 100%; border-radius: 4px 0 0 4px !important; display: block; }
.keyset .ic { position: absolute; left: 4px; top: 2px; }

/* corner grips */
.corner { position: absolute; width: 12px; height: 12px; pointer-events: none; }
.tr { top: 0; right: 0; }
.bl { bottom: 0; left: 0; transform: rotate(180deg); }

/* main regions */
.main { flex: 1; display: flex; min-height: 0; }
.work { flex: 1; min-width: 0; display: flex; flex-direction: column; }
.views { flex: 1; display: flex; min-height: 0; }
.area { display: flex; flex-direction: column; min-width: 0; }
.uv { flex: 831 1 0; }
.v3d { flex: 820 1 0; border-left: 1px solid #000; }
.canvas { position: relative; flex: 1; min-width: 0; min-height: 0; background: #393939; overflow: hidden; }
.uv .canvas { background: #353535; }
.canvas > svg:first-child { position: absolute; inset: 0; width: 100%; height: 100%; }
.crisp { shape-rendering: crispEdges; }
.note { fill: #f00; font: bold 13px "DejaVu Sans Condensed", "DejaVu Sans", sans-serif; }
.app .tab { position: absolute; top: 21px; width: 12px; height: 15px; background: #252525; color: #8a8a8a; font: bold 11px/15px "DejaVu Sans", sans-serif; }
.app .tab.left { left: 0; border-radius: 0 4px 4px 0; }
.app .tab.right { right: 0; border-radius: 4px 0 0 4px; }
.body { flex: 1; display: flex; min-height: 0; }
.v3d .bar { background: #727272; }

/* tool shelf and panels */
.tools { width: 160px; flex: none; display: flex; flex-direction: column; background: #727272; border-left: 1px solid #808080; border-right: 1px solid #5c5c5c; }
.panel { margin: 0 4px 0 5px; border-top: 1px solid #3c3c3c; box-shadow: inset 0 1px #929292; }
.panel.first { border-color: transparent; box-shadow: none; }
.tools .panel { margin: 0 5px 0 4px; }
h2 { display: flex; align-items: center; height: 23px; padding: 3px 4px 0 8px !important; font-size: 12px; line-height: 20px; position: relative; }
.first h2 { padding-top: 1px !important; }
h2 button { display: flex; align-items: center; gap: 3px; height: 20px; }
h2 button::before { content: ""; width: 9px; height: 8px; background: #262626; clip-path: polygon(0 0, 100% 50%, 0 100%); }
h2 button.open::before { clip-path: polygon(0 0, 100% 0, 50% 100%); }
.hatch { width: 17px; height: 17px; margin-left: auto; }
.pbody { padding: 9px 3px 7px; display: flex; flex-direction: column; gap: 5px; }
.out { padding-bottom: 9px; }
.tools .pbody { padding-top: 8px; gap: 0; }
.tgroup + .tgroup { margin-top: 5px; }
.lbl { height: 20px; line-height: 23px; padding-left: 7px !important; white-space: nowrap; }
.stack { border: 1px solid #333; border-radius: 5px; overflow: hidden; background: #333; display: flex; flex-direction: column; gap: 1px; box-shadow: 0 1px #868686; }
.srow { display: flex; gap: 1px; }
.app .tool { flex: 1 1 0; height: 19px; border: 0 !important; justify-content: flex-start; padding: 2px 0 0 7px; line-height: 17px; }
.stack .srow:last-child .tool { height: 18px; }
.check { display: flex; align-items: center; height: 20px; padding: 1px 0 0 3px; gap: 8px; white-space: nowrap; line-height: 23px; }
h2 .check { gap: 6px; margin-left: 3px; padding: 0; line-height: 22px; }
.lit { color: #fff; }
.off { opacity: .55; }
.border { width: 61px; flex: none; }
.app .check input { appearance: none; position: relative; width: 14px; height: 14px; flex: none; border: 1px solid #2c2c2c; border-radius: 4px; background: linear-gradient(#444, #5a5a5a); }
.check input:checked::after { content: ""; position: absolute; left: 4px; top: -2px; width: 4px; height: 9px; border: solid #e8e8e8; border-width: 0 2px 2px 0; transform: rotate(40deg); }
.operator { margin-top: auto; height: 217px; border-top: 1px solid #606060; box-shadow: inset 0 1px #888; padding: 1px 4px 0; }

/* number fields and sliders */
.num { position: relative; display: block; height: 20px; border: 1px solid #333; background: linear-gradient(#9c9c9c, #b6b6b6); overflow: hidden; }
.app .num input { width: 100%; height: 18px; text-align: center; padding-top: 2px; display: block; }
.num::before, .num::after { content: ""; position: absolute; top: 6px; width: 4px; height: 6px; background: #6c6c6c; pointer-events: none; }
.num::before { left: 7px; clip-path: polygon(100% 0, 0 50%, 100% 100%); }
.num::after { right: 7px; clip-path: polygon(0 0, 100% 50%, 0 100%); }
.w115 { width: 116px; }
.w112 { width: 113px; }
.w88 { width: 88px; }
.pill > :first-child { border-radius: 10px 0 0 10px !important; }
.pill > :last-child { border-radius: 0 10px 10px 0 !important; }
.pill > :only-child { border-radius: 10px !important; }
.nstack { border: 1px solid #333; border-radius: 10px; overflow: hidden; box-shadow: 0 1px #868686; }
.nstack .num { border: 0; border-bottom: 1px solid #333; }
.nstack > :last-child { height: 18px; border-bottom: 0; }
.slide { display: block; position: relative; height: 20px; line-height: 21px; }
.app .slide input { appearance: none; display: block; width: 100%; height: 100%; background: linear-gradient(to right, #747474 var(--p), #adadad var(--p)); }
.slide input::-webkit-slider-thumb { appearance: none; width: 1px; height: 1px; }
.slide span { position: absolute; inset: 0; text-align: center; pointer-events: none; }
.round { border: 1px solid #333; border-radius: 10px; overflow: hidden; }

/* timeline */
.timeline { flex: none; border-top: 1px solid #000; background: #6c6c6c; }
.track { position: relative; height: 48px; background: #434343; overflow: hidden; }
.track i, .track b { position: absolute; top: 0; bottom: 0; width: 1px; margin-left: -1px; background: rgba(0, 0, 0, .28); }
.track .mid { background: rgba(0, 0, 0, .1); }
.track b { width: 3px; background: #5cc03c; }
.range { position: absolute; top: 0; bottom: 0; background: #727272; }
.ruler { position: relative; height: 16px; background: #727272; border-bottom: 1px solid #606060; }
.rail { height: 14px; margin: 0 5px 0 3px; border: 1px solid #3c3c3c; border-radius: 7px; background: radial-gradient(circle at 6px 6px, #555 5px, transparent 5px), radial-gradient(circle at calc(100% - 6px) 6px, #666 5px, transparent 5px), linear-gradient(#8a8a8a, #757575); }
.ruler span { position: absolute; top: 0; line-height: 16px; transform: translateX(-50%); font-size: 12px; }
.timeline .bar { height: 27px; }

/* right column */
.side { width: 252px; flex: none; display: flex; flex-direction: column; border-left: 1px solid #000; background: #727272; overflow: hidden; }
.outliner { position: relative; height: 167px; border-bottom: 1px solid #000; background: #727272; }
.scenes { width: 110px; flex: none; }
.tree { position: relative; padding-top: 2px; }
.tree ul { width: 234px; }
.tree li { position: relative; z-index: 1; display: flex; align-items: center; height: 20px; padding-left: 32px !important; line-height: 22px; }
.tree li:nth-child(even) { background: #787878; }
.tree .root { width: 175px; background: #7e8487; padding-left: 3px !important; }
.app .tg { width: 7px; height: 7px; margin: 0 1px; border-radius: 50%; background: linear-gradient(#111, #111) center / 5px 1px no-repeat, linear-gradient(#111, #111) center / 1px 5px no-repeat, #ddd; box-shadow: 0 0 0 1px #333; flex: none; }
.app .tg.open { background: linear-gradient(#111, #111) center / 5px 1px no-repeat #ddd; }
.tree .l0 { padding-left: 23px !important; }
.tree .l1 { padding-left: 28px !important; }
.tree .l2 { padding-left: 41px !important; }
.wire { width: 9px; height: 1px; background: #333; margin-top: -1px; flex: none; }
.halo { width: 18px; height: 18px; border-radius: 50%; background: #9a9a9a; display: flex; align-items: center; justify-content: center; margin-right: 2px; flex: none; }
.root .halo { background: #a0a4a6; }
.blue { background: #9a9ab0; }
.gold { background: #b08850; }
.none { background: none; }
.oi { margin: 0 3px 0 5px; }
.l1 .halo { margin-left: 8px; }
.l0 .halo:nth-of-type(3) { margin-left: 8px; }
.vb { width: 2px; height: 12px; background: #4c4c4c; margin-left: 10px; }
.act { color: #fff; }
.flags { position: absolute; left: 175px; top: 2px; display: flex; }
.flags button { width: 20px; display: flex; justify-content: center; }
.cols { position: absolute; z-index: 2; inset: 0 0 0 174px; display: flex; gap: 19px; pointer-events: none; }
.cols i { width: 1px; background: #5e5e5e; }
.stem { position: absolute; z-index: 1; left: 27px; top: 22px; width: 1px; height: 84px; background: #4a4a4a; }
.vscroll { position: absolute; right: 4px; top: 5px; width: 13px; height: 113px; border: 1px solid #3c3c3c; border-radius: 7px; background: linear-gradient(to right, #989898, #787878); }
.hscroll { margin: 1px 22px 0 4px; border-radius: 7px; background: #5a5a5a; }
.hscroll div { width: 77%; height: 13px; border: 1px solid #3c3c3c; border-radius: 7px; background: linear-gradient(#989898, #7c7c7c); }
.properties { position: relative; flex: 1; background: #727272; }
.ptabs { display: flex; margin-left: 8px; }
.app .ptabs button { width: 20px; height: 20px; flex: none; border: 1px solid #242424; border-left-width: 0; background: linear-gradient(#4c4c4c, #383838); display: flex; align-items: center; justify-content: center; }
.ptabs button:first-child { border-radius: 4px 0 0 4px !important; }
.ptabs button:not(.on) .ic { opacity: .75; }
.context { display: flex; align-items: center; gap: 6px; height: 35px; padding: 2px 0 0 10px; line-height: 22px; }
.context span { margin-left: -3px; }
.full { width: 100%; }
.grow { flex: 1; }
.r3 .lite { flex: 1; padding: 0 2px 0 3px !important; }
.r3 span { flex: 1; padding-top: 2px; }
.line { display: flex; }
.line .lbl { width: 83px; flex: none; }
.disp, .depth { flex: 1; }
.two { display: flex; gap: 8px; }
.two > div { flex: 1 1 0; min-width: 0; }
.rows > div { display: flex; flex-direction: column; gap: 2px; }
.gap2 { margin-top: 2px; }
.app .seg button { flex: 1; padding-top: 1px; }
.fmt { display: flex; flex-direction: column; gap: 2px; }
</style>
